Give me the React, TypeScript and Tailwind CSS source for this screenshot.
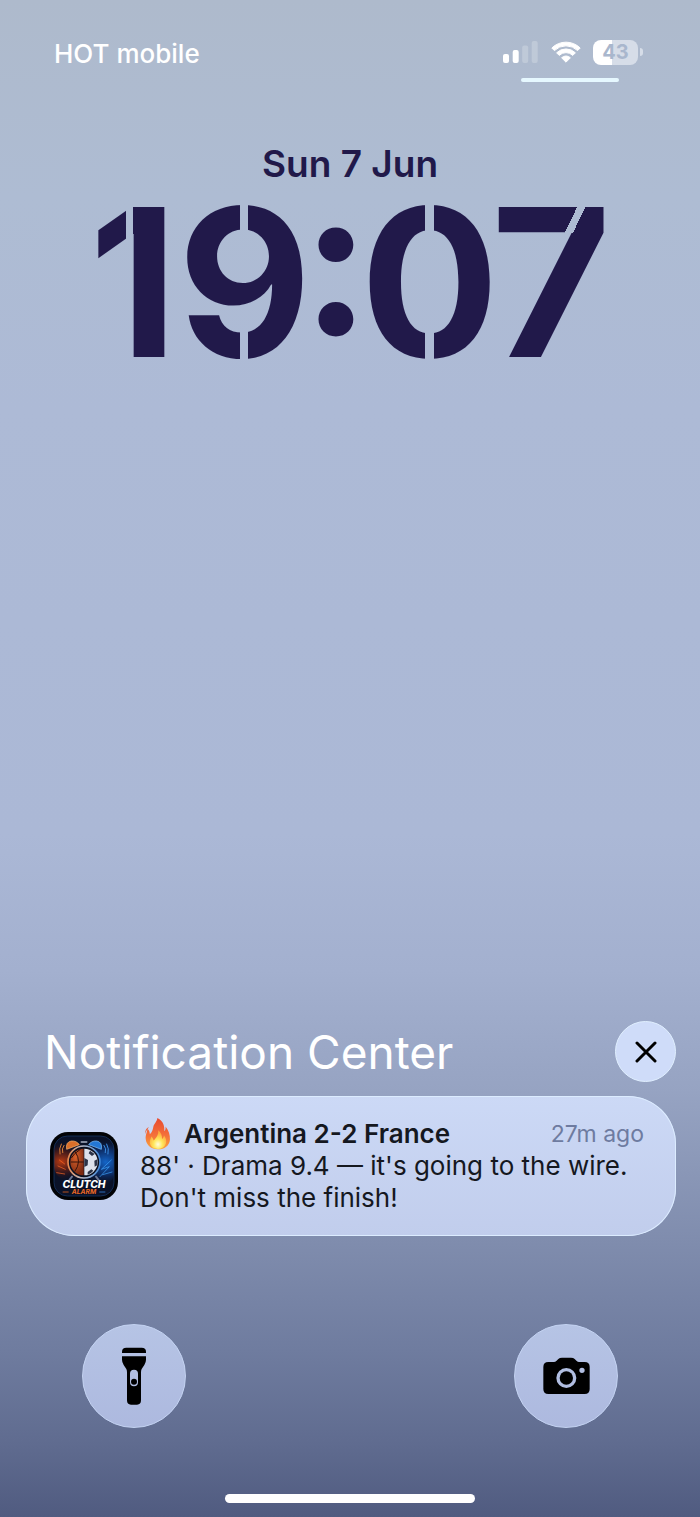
import { clsx } from 'clsx'

const SignalIcon = () => (
  <svg width={36} height={24} viewBox="0 0 36 24" aria-label="Signal" role="img">
    <rect x="0" y="14" width="6" height="9" rx="2" fill="#fff" />
    <rect x="9.7" y="10" width="6" height="13" rx="2" fill="#fff" />
    <rect x="19.2" y="5.5" width="6" height="17.5" rx="2" fill="#fff" opacity=".22" />
    <rect x="28.7" y="1" width="6" height="22" rx="2" fill="#fff" opacity=".22" />
  </svg>
)

const WifiIcon = () => (
  <svg width={30} height={24} viewBox="0 0 30 24" aria-label="Wi-Fi" role="img">
    <g fill="#fff" stroke="#fff" strokeWidth="1" strokeLinejoin="round">
      <path d="M.8 8A20.2 20.2 0 0 1 29.2 8L26.6 10.6A16.5 16.5 0 0 0 3.4 10.6Z" />
      <path d="M5.6 12.8A13.4 13.4 0 0 1 24.4 12.8L21.8 15.4A9.7 9.7 0 0 0 8.2 15.4Z" />
      <path d="M10.6 17.8A6.3 6.3 0 0 1 19.4 17.8L15 22.2Z" />
    </g>
  </svg>
)

const BatteryIcon = () => (
  <div className="flex items-center gap-0.5">
    <div className="flex h-[25px] w-[45px] items-center justify-center rounded-lg bg-linear-to-r from-white from-43% to-[#d6dde8] to-43% font-bold text-[20px] leading-6 text-[#a9b7cd]">
      43
    </div>
    <div className="h-2 w-[3px] rounded-r-full bg-[#d6dde8]" />
  </div>
)

const FlameIcon = () => (
  <svg width={28} height={32} viewBox="0 0 84 102" aria-label="Fire" role="img">
    <defs>
      <linearGradient id="flame" x1="0" y1="0" x2="0" y2="1">
        <stop offset="0" stopColor="#e8492f" />
        <stop offset=".55" stopColor="#f4703a" />
        <stop offset="1" stopColor="#fba43a" />
      </linearGradient>
      <radialGradient id="flameCore" cx=".5" cy=".75" r=".6">
        <stop offset="0" stopColor="#fffde0" />
        <stop offset=".45" stopColor="#ffe75c" />
        <stop offset="1" stopColor="#fdab3d" />
      </radialGradient>
    </defs>
    <path
      d="M40 0C60 10 63 26 62 42C66 38 67 33 66 27C76 40 81 54 80 69C78 88 63 100 42 100C20 100 5 87 3 68C1 54 8 45 8 34C13 38 16 44 16 52C24 45 25 37 27 29C29 18 39 12 40 0Z"
      fill="url(#flame)"
    />
    <path d="M13 29C8 37 2 43 2 52C0 42 3 34 13 29Z" fill="#ee5a32" />
    <path
      d="M43 39C52 47 55 56 55 67C59 64 61 60 61 55C68 64 70 74 67 82C62 94 53 99 42 99C28 99 18 92 16 80C15 71 19 66 21 59C25 63 27 67 28 72C36 64 44 54 43 39Z"
      fill="url(#flameCore)"
    />
  </svg>
)

const ClutchAlarmIcon = () => (
  <svg
    width={68}
    height={68}
    viewBox="0 0 204 204"
    className="shrink-0"
    aria-label="Clutch Alarm"
    role="img">
    <defs>
      <radialGradient id="fireGlow" cx=".12" cy=".58" r=".45">
        <stop offset="0" stopColor="#b83a12" />
        <stop offset=".55" stopColor="#4a1a18" stopOpacity=".8" />
        <stop offset="1" stopColor="#0a1026" stopOpacity="0" />
      </radialGradient>
      <radialGradient id="iceGlow" cx=".86" cy=".52" r=".48">
        <stop offset="0" stopColor="#1465c8" />
        <stop offset=".55" stopColor="#0d2f6c" stopOpacity=".85" />
        <stop offset="1" stopColor="#0a1026" stopOpacity="0" />
      </radialGradient>
      <linearGradient id="ring" x1="0" x2="1">
        <stop offset="0" stopColor="#e48850" />
        <stop offset=".45" stopColor="#b8bccb" />
        <stop offset="1" stopColor="#3d86d8" />
      </linearGradient>
      <radialGradient id="basketball" cx=".4" cy=".3" r=".7">
        <stop offset="0" stopColor="#d9622b" />
        <stop offset="1" stopColor="#7c2a12" />
      </radialGradient>
    </defs>
    <rect width="204" height="204" rx="54" fill="#020306" />
    <rect x="12" y="12" width="180" height="180" rx="40" fill="#0a1228" />
    <rect x="12" y="12" width="180" height="132" rx="40" fill="url(#fireGlow)" />
    <rect x="12" y="12" width="180" height="150" rx="40" fill="url(#iceGlow)" />
    <rect x="12" y="12" width="180" height="180" rx="40" fill="none" stroke="#1a3d70" strokeWidth="2" />
    <g fill="none" strokeLinecap="round">
      <path d="M24 102L46 112M20 122L44 126M28 84L44 96" stroke="#ff6a26" strokeWidth="2" />
      <path d="M184 84L154 112L178 104L150 134M186 120L158 128" stroke="#3fa4ff" strokeWidth="2" />
      <path d="M42 40Q34 50 38 62M34 36Q26 50 30 66" stroke="#d98038" strokeWidth="3" />
      <path d="M162 40Q170 50 166 62M170 36Q178 50 174 66" stroke="#3a8be0" strokeWidth="3" />
      <path d="M66 134L58 144M138 134L146 144" stroke="#6d7896" strokeWidth="6" />
      <path d="M94 30H110" stroke="#aab2c4" strokeWidth="5" />
    </g>
    <path d="M50 52Q46 30 64 27Q80 26 88 38Z" fill="#d96f2a" stroke="#ffb56b" strokeWidth="2" />
    <path d="M154 52Q158 30 140 27Q124 26 116 38Z" fill="#2477d4" stroke="#86c6ff" strokeWidth="2" />
    <circle cx="102" cy="90" r="48" fill="#0b1020" stroke="url(#ring)" strokeWidth="5" />
    <path d="M101 50A40 40 0 0 0 101 130Z" fill="url(#basketball)" />
    <path d="M103 50A40 40 0 0 1 103 130Z" fill="#dde2ec" />
    <path d="M62 90H101M76 60Q96 88 74 119M92 51Q70 66 64 78" fill="none" stroke="#35120b" strokeWidth="3" />
    <path
      d="M103 78L114 84L113 100L103 105ZM120 56L134 66L126 72L116 64ZM133 86L142 82V100L134 104ZM113 120L124 112L130 116Q122 126 113 128Z"
      fill="#2c3448"
    />
    <text
      x="102"
      y="168"
      textAnchor="middle"
      fill="#fff"
      className="font-['Inter'] text-[31px] font-extrabold italic">
      CLUTCH
    </text>
    <text
      x="102"
      y="187"
      textAnchor="middle"
      fill="#ef6a24"
      className="font-['Inter'] text-[20px] font-bold italic">
      ALARM
    </text>
    <path d="M38 180H56" stroke="#b4501f" strokeWidth="3" />
    <path d="M148 180H166" stroke="#2b6bb8" strokeWidth="3" />
  </svg>
)

const CloseIcon = () => (
  <svg width={22} height={22} viewBox="0 0 22 22" aria-hidden="true">
    <path d="M2 2L20 20M20 2L2 20" stroke="#000" strokeWidth="3" strokeLinecap="round" />
  </svg>
)

const FlashlightIcon = () => (
  <svg width={26} height={58} viewBox="0 0 78 174" aria-hidden="true">
    <path d="M3 18V14Q3 2 16 2H62Q75 2 75 14V18Z" />
    <path
      fillRule="evenodd"
      d="M3 28H75V38Q75 46 70 54L62 66Q60 70 60 76V160Q60 173 48 173H30Q18 173 18 160V76Q18 70 16 66L8 54Q3 46 3 38ZM39 68Q27 68 27 80V105Q27 118 39 118Q51 118 51 105V80Q51 68 39 68Z"
    />
    <circle cx="39" cy="104" r="9" />
  </svg>
)

const CameraIcon = () => (
  <svg width={47} height={38} viewBox="0 0 141 114" aria-hidden="true">
    <path
      fillRule="evenodd"
      d="M16 15H33Q37 15 40 12L46 6Q50 2 57 2H84Q91 2 95 6L101 12Q104 15 108 15H125Q140 15 140 30V96Q140 111 125 111H16Q1 111 1 96V30Q1 15 16 15ZM70 33A30 30 0 1 0 70 93A30 30 0 1 0 70 33ZM117 32A8 8 0 1 0 117 48A8 8 0 1 0 117 32Z"
    />
    <circle cx="70" cy="63" r="20" />
  </svg>
)

// every digit of the clock gets its own stencil cut
const CLOCK = [
  {
    char: '1',
    style:
      '[mask-image:linear-gradient(90deg,#000_42%,transparent_42%,transparent_50%,#000_50%)]'
  },
  {
    char: '9',
    style:
      '[mask-image:linear-gradient(90deg,#000_46%,transparent_46%,transparent_52%,#000_52%),linear-gradient(180deg,transparent_28%,#000_28%,#000_70%,transparent_70%)]'
  },
  { char: ':', style: '-mx-2.5 [font-feature-settings:"case"]' },
  {
    char: '0',
    style:
      '[mask-image:linear-gradient(90deg,#000_47%,transparent_47%,transparent_53%,#000_53%)]'
  },
  {
    char: '7',
    style:
      '-ml-2 [mask-image:linear-gradient(116deg,#000_45%,transparent_45%,transparent_49%,#000_49%),linear-gradient(180deg,transparent_23%,#000_23%)]'
  }
]

const QuickAction: React.FC<{
  label: string
  children: React.ReactNode
}> = ({ label, children }) => (
  <button
    type="button"
    aria-label={label}
    className="flex size-[104px] items-center justify-center rounded-full border border-[#c4d3f2] bg-linear-to-b from-[#b6c4e5] to-[#adb9df]">
    {children}
  </button>
)

const App = () => {
  return (
    <div className="flex min-h-screen flex-col bg-[linear-gradient(180deg,#aebacc_0%,#aebcd3_13%,#adbad6_27%,#abb8d6_55%,#a3b0cf_64%,#96a3c2_72%,#7f8cad_82%,#6f7c9f_89%,#606c90_95%,#505b80_100%)] font-['Inter',sans-serif]">
      <header className="flex items-start justify-between pt-9 pr-[57px] pl-[54px] text-white">
        <span className="text-[26px] leading-9 font-medium">HOT mobile</span>
        <div className="flex flex-col items-end gap-2.5">
          <div className="flex h-8 items-center gap-3">
            <SignalIcon />
            <WifiIcon />
            <BatteryIcon />
          </div>
          <div className="mr-6 h-1 w-[98px] rounded-full bg-[#e6f8ff]" />
        </div>
      </header>

      <main className="flex grow flex-col">
        <div className="flex flex-col items-center gap-1 pt-[58px] text-[#21194a]">
          <p className="text-[37px] leading-12 font-semibold">Sun 7 Jun</p>
          <h1 className="flex text-[206px] leading-[180px] font-bold">
            {CLOCK.map(({ char, style }) => (
              <span key={char} className={clsx('block', style)}>
                {char}
              </span>
            ))}
          </h1>
        </div>

        <section className="mt-auto flex flex-col gap-3.5 pr-6 pl-[26px]">
          <div className="flex items-center justify-between pl-[18px]">
            <h2 className="text-[46px] leading-[60px] font-normal text-white">
              Notification Center
            </h2>
            <button
              type="button"
              aria-label="Clear notifications"
              className="flex size-[61px] items-center justify-center rounded-full border border-[#e0efff] bg-[#cfdcf9]">
              <CloseIcon />
            </button>
          </div>

          <article className="flex items-center gap-[22px] rounded-[48px] bg-linear-to-b from-[#ccd9f6] to-[#c1cdec] py-[22px] pr-8 pl-6 text-[26px] leading-8 text-[#15181f] inset-ring inset-ring-[#dcecff]">
            <ClutchAlarmIcon />
            <div className="grow">
              <div className="flex items-center justify-between">
                <h3 className="flex items-center gap-3 pl-1 font-semibold">
                  <FlameIcon />
                  Argentina 2-2 France
                </h3>
                <time className="text-[23px] text-[#6e7ba0]">27m ago</time>
              </div>
              <p>
                88' · Drama 9.4 — it's going to the wire.
                <br />
                Don't miss the finish!
              </p>
            </div>
          </article>
        </section>
      </main>

      <footer className="flex flex-col items-center gap-[66px] pt-[88px] pb-3.5">
        <div className="flex w-full justify-between px-[82px]">
          <QuickAction label="Flashlight">
            <FlashlightIcon />
          </QuickAction>
          <QuickAction label="Camera">
            <CameraIcon />
          </QuickAction>
        </div>
        <div className="h-[9px] w-[250px] rounded-full bg-white" />
      </footer>
    </div>
  )
}

export default App
